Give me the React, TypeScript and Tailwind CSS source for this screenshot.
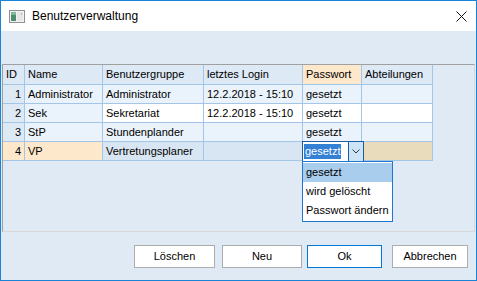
import React from "react";

interface Row {
    id: number;
    name: string;
    group: string;
    login: string;
    password: string;
}

const rows: Row[] = [
    { id: 1, name: "Administrator", group: "Administrator", login: "12.2.2018 - 15:10", password: "gesetzt" },
    { id: 2, name: "Sek", group: "Sekretariat", login: "12.2.2018 - 15:10", password: "gesetzt" },
    { id: 3, name: "StP", group: "Stundenplander", login: "", password: "gesetzt" },
    { id: 4, name: "VP", group: "Vertretungsplaner", login: "", password: "gesetzt" },
];

const line = "border-r border-b border-[#a3c6e8]";
const cell = `h-[19px] ${line} pl-[3px] leading-[18px] whitespace-nowrap overflow-hidden`;
const head = `h-[20px] ${line} pl-[3px] leading-[19px] whitespace-nowrap bg-[#dde9f5]`;

function AppIcon() {
    return (
        <svg width="16" height="13" viewBox="0 0 16 13">
            <rect x="0.5" y="0.5" width="15" height="12" fill="#f2f2f2" stroke="#8f8f8f" />
            <rect x="2" y="2" width="5" height="9" fill="#4d8c6f" />
            <rect x="2" y="2" width="5" height="3" fill="#7fb79a" />
            <rect x="8" y="2" width="6" height="9" fill="#e6e6e6" />
            <rect x="12" y="3" width="1" height="2" fill="#b9b9b9" />
        </svg>
    );
}

function CloseIcon() {
    return (
        <svg width="11" height="11" viewBox="0 0 11 11">
            <path d="M0.5 0.5 L10.5 10.5 M10.5 0.5 L0.5 10.5" stroke="#111" strokeWidth="1" fill="none" />
        </svg>
    );
}

function PasswordEditor() {
    return (
        <>
            {/* Combo box editor */}
            <div className="absolute left-[-1px] top-[-1px] w-[62px] h-[21px] border border-[#1b5ea6] bg-white flex z-10">
                <div className="flex-1 pl-[1px] pt-[1px]">
                    <span className="inline-block bg-[#3380d5] text-white leading-[15px] px-[1px]">gesetzt</span>
                </div>
                <div className="w-[15px] border-l border-[#1b5ea6] bg-[#cde4f7] flex items-center justify-center">
                    <svg width="8" height="5" viewBox="0 0 8 5">
                        <path d="M0.5 0.5 L4 4 L7.5 0.5" stroke="#3a3a3a" strokeWidth="1" fill="none" />
                    </svg>
                </div>
            </div>

            {/* Drop-down list */}
            <div className="absolute left-[-1px] top-[19px] w-[91px] border border-[#1f77d0] bg-white py-[1px] z-20">
                <div className="h-[19px] leading-[19px] pl-[3px] bg-[#a9cdec]">gesetzt</div>
                <div className="h-[19px] leading-[19px] pl-[3px]">wird gelöscht</div>
                <div className="h-[19px] leading-[19px] pl-[3px]">Passwort ändern</div>
            </div>
        </>
    );
}

export default function App() {
    return (
        <div
            className="w-[477px] h-[281px] border border-[#1883d7] bg-white flex flex-col text-black"
            style={{ fontFamily: '"Liberation Sans", Arial, sans-serif' }}
        >
            {/* Title bar */}
            <div className="h-[30px] flex items-center pl-[8px] pr-[9px]">
                <AppIcon />
                <span className="ml-[7px] text-[12px] flex-1">Benutzerverwaltung</span>
                <CloseIcon />
            </div>

            {/* Client area */}
            <div className="flex-1 bg-[#dfeaf4] flex flex-col pt-[33px] pl-[1px] text-[11px]">
                <div className="w-[473px] h-[168px] border-t border-l border-[#a0a0a0] border-r border-b border-r-[#d8d8d8] border-b-[#d8d8d8]">
                    <div className="grid grid-cols-[22px_78px_101px_99px_59px_71px] w-[430px]">
                        {/* Header */}
                        <div className={head}>ID</div>
                        <div className={head}>Name</div>
                        <div className={head}>Benutzergruppe</div>
                        <div className={head}>letztes Login</div>
                        <div className={`${line} h-[20px] pl-[3px] leading-[19px] bg-[#fde8cb]`}>Passwort</div>
                        <div className={head}>Abteilungen</div>

                        {rows.map(r => {
                            const current = r.id === 4;
                            const white = r.id === 2;
                            const data = current ? "bg-[#d8e5f2]" : white ? "bg-white" : "bg-[#eaf2fb]";
                            return (
                                <React.Fragment key={r.id}>
                                    <div className={`${cell} text-right pr-[3px] ${current ? "bg-[#fde8cb]" : "bg-[#dde9f5]"}`}>{r.id}</div>
                                    <div className={`${cell} ${current ? "bg-[#fde8cb]" : "bg-[#eaf2fb]"}`}>{r.name}</div>
                                    <div className={`${cell} ${data}`}>{r.group}</div>
                                    <div className={`${cell} ${data}`}>{r.login}</div>
                                    {current ? (
                                        <div className={`${line} h-[19px] relative bg-white`}>
                                            <PasswordEditor />
                                        </div>
                                    ) : (
                                        <div className={`${cell} ${data}`}>{r.password}</div>
                                    )}
                                    <div className={`${cell} ${current ? "bg-[#e8dcbd]" : data}`}></div>
                                </React.Fragment>
                            );
                        })}
                    </div>
                </div>

                {/* Buttons */}
                <div className="flex mt-[13px] pl-[132px]">
                    <button className="w-[81px] h-[23px] border border-[#adadad] bg-white">Löschen</button>
                    <button className="ml-[7px] w-[80px] h-[23px] border border-[#adadad] bg-white">Neu</button>
                    <button className="ml-[5px] w-[75px] h-[23px] border border-[#0078d7] bg-white">Ok</button>
                    <button className="ml-[10px] w-[76px] h-[23px] border border-[#adadad] bg-white">Abbrechen</button>
                </div>
            </div>
        </div>
    );
}
